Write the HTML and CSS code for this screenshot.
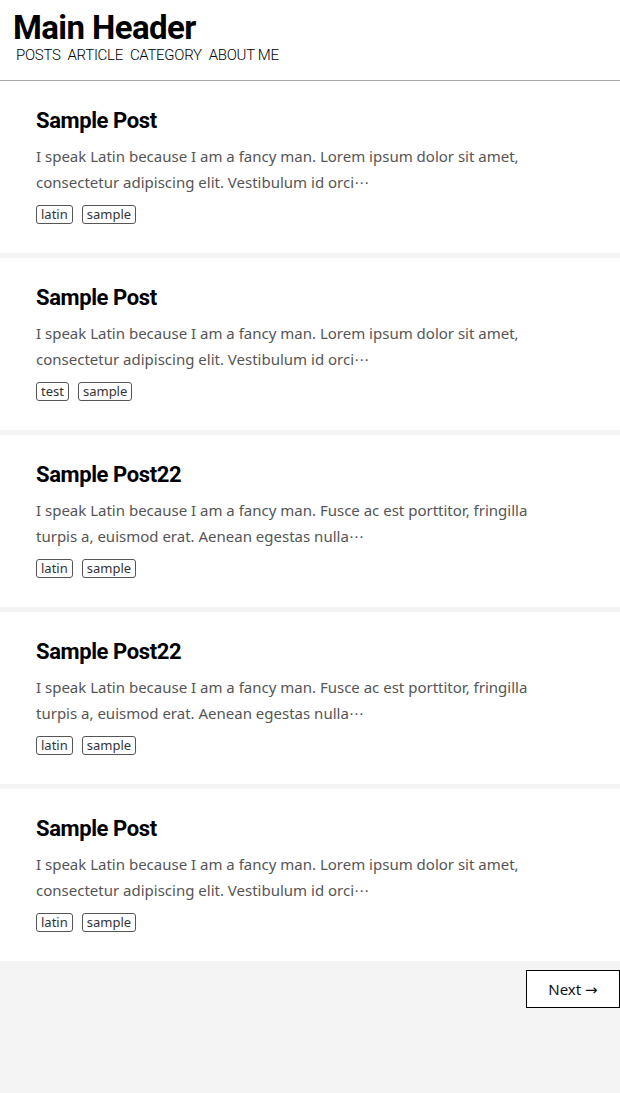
FILE: index.html
```html
<!DOCTYPE html>
<html lang="en">
<head>
<meta charset="utf-8">
<title>Main Header</title>
<link rel="stylesheet" href="styles.css">
</head>
<body>
<header class="site-header">
  <h1 class="site-title">Main Header</h1>
  <nav class="site-nav">
    <a href="#">POSTS</a>
    <a href="#">ARTICLE</a>
    <a href="#">CATEGORY</a>
    <a href="#">ABOUT ME</a>
  </nav>
</header>
<main class="posts">
  <article class="post">
    <h2 class="post-title">Sample Post</h2>
    <p class="post-excerpt">I speak Latin because I am a fancy man. Lorem ipsum dolor sit amet,<br>consectetur adipiscing elit. Vestibulum id orci⋯</p>
    <div class="tags"><span class="tag">latin</span><span class="tag">sample</span></div>
  </article>
  <article class="post">
    <h2 class="post-title">Sample Post</h2>
    <p class="post-excerpt">I speak Latin because I am a fancy man. Lorem ipsum dolor sit amet,<br>consectetur adipiscing elit. Vestibulum id orci⋯</p>
    <div class="tags"><span class="tag">test</span><span class="tag">sample</span></div>
  </article>
  <article class="post">
    <h2 class="post-title">Sample Post22</h2>
    <p class="post-excerpt">I speak Latin because I am a fancy man. Fusce ac est porttitor, fringilla<br>turpis a, euismod erat. Aenean egestas nulla⋯</p>
    <div class="tags"><span class="tag">latin</span><span class="tag">sample</span></div>
  </article>
  <article class="post">
    <h2 class="post-title">Sample Post22</h2>
    <p class="post-excerpt">I speak Latin because I am a fancy man. Fusce ac est porttitor, fringilla<br>turpis a, euismod erat. Aenean egestas nulla⋯</p>
    <div class="tags"><span class="tag">latin</span><span class="tag">sample</span></div>
  </article>
  <article class="post">
    <h2 class="post-title">Sample Post</h2>
    <p class="post-excerpt">I speak Latin because I am a fancy man. Lorem ipsum dolor sit amet,<br>consectetur adipiscing elit. Vestibulum id orci⋯</p>
    <div class="tags"><span class="tag">latin</span><span class="tag">sample</span></div>
  </article>
</main>
<div class="pager">
  <a class="next" href="#">Next →</a>
</div>
</body>
</html>
```
FILE: styles.css
```css
html, body {
  margin: 0;
  padding: 0;
}
body {
  background: #f4f4f4;
  font-family: "Noto Sans", "DejaVu Sans", sans-serif;
  min-height: 1093px;
}
.site-header {
  background: #fff;
  padding: 9px 13px 16px;
  border-bottom: 1px solid #aaa;
}
.site-title {
  margin: 0;
  font-family: Roboto, sans-serif;
  font-weight: 700;
  font-size: 33px;
  line-height: 37px;
  color: #000;
  letter-spacing: -0.6px;
}
.site-nav {
  display: flex;
  gap: 7px;
  padding-left: 3px;
  font-family: Roboto, sans-serif;
  font-weight: 300;
  font-size: 15px;
  line-height: 18px;
  letter-spacing: -0.3px;
}
.site-nav a {
  color: #000;
  text-decoration: none;
}
.posts {
  display: flex;
  flex-direction: column;
  gap: 5px;
}
.post {
  background: #fff;
  padding: 26px 36px 29px;
}
.post-title {
  margin: 0;
  font-family: Roboto, sans-serif;
  font-weight: 700;
  font-size: 22px;
  line-height: 28px;
  letter-spacing: -0.4px;
  color: #000;
}
.post-excerpt {
  margin: 8px 0 0;
  font-size: 15px;
  line-height: 26px;
  color: #555;
}
.tags {
  display: flex;
  gap: 9px;
  margin-top: 10px;
}
.tag {
  border: 1px solid #555;
  border-radius: 3px;
  padding: 0 4px;
  font-size: 13px;
  line-height: 17px;
  color: #333;
}
.pager {
  display: flex;
  justify-content: flex-end;
  padding-top: 9px;
}
.next {
  width: 92px;
  height: 36px;
  background: #fff;
  border: 1px solid #000;
  display: flex;
  align-items: center;
  justify-content: center;
  font-size: 15px;
  color: #111;
  text-decoration: none;
}
```
